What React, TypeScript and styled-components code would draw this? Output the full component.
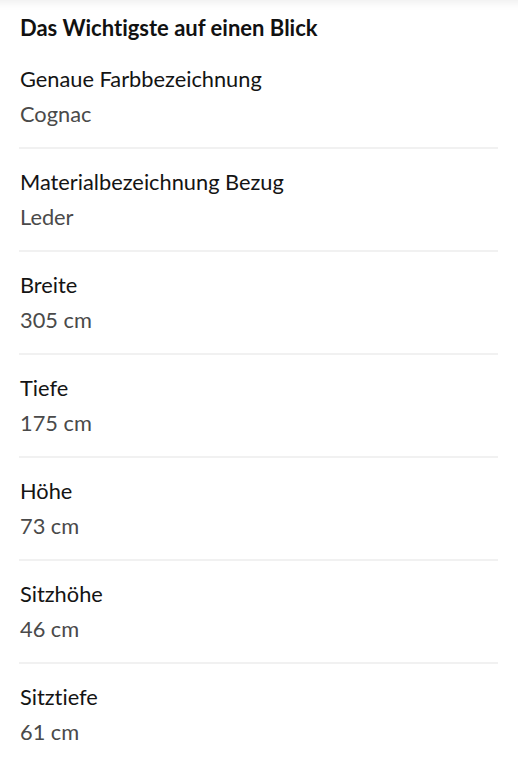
import React from "react";
import styled, { createGlobalStyle } from "styled-components";

const GlobalStyle = createGlobalStyle`
  html, body {
    margin: 0;
    padding: 0;
    background: #fff;
  }
  body {
    font-family: Lato, "Noto Sans", Arial, sans-serif;
    font-variant-ligatures: none;
  }
`;

const Page = styled.section`
  width: 518px;
  min-height: 768px;
  background: #fff;
  box-shadow: inset 0 12px 10px -10px rgba(0, 0, 0, 0.08);
  padding: 14px 20px 0 19px;
  box-sizing: border-box;
`;

const Heading = styled.h2`
  margin: 0 0 4px 1px;
  font-size: 22px;
  line-height: 28px;
  font-weight: 700;
  color: #111;
`;

const List = styled.dl`
  margin: 0;
  padding: 0;
`;

const Row = styled.div<{ $last?: boolean }>`
  display: flex;
  flex-direction: column;
  gap: 11px;
  padding: 21px 0 21px 1px;
  border-bottom: ${(p) => (p.$last ? "none" : "2px solid #f1f1f1")};
`;

const Label = styled.dt`
  margin: 0;
  font-size: 21.8px;
  line-height: 24px;
  color: #141414;
`;

const Value = styled.dd`
  margin: 0;
  font-size: 21.8px;
  line-height: 24px;
  color: #4a4a4a;
`;

const specs = [
  { id: 1, label: "Genaue Farbbezeichnung", value: "Cognac" },
  { id: 2, label: "Materialbezeichnung Bezug", value: "Leder" },
  { id: 3, label: "Breite", value: "305 cm" },
  { id: 4, label: "Tiefe", value: "175 cm" },
  { id: 5, label: "Höhe", value: "73 cm" },
  { id: 6, label: "Sitzhöhe", value: "46 cm" },
  { id: 7, label: "Sitztiefe", value: "61 cm" },
];

function App() {
  return (
    <>
      <GlobalStyle />
      <Page>
        <Heading>Das Wichtigste auf einen Blick</Heading>
        <List>
          {specs.map((item, i) => (
            <Row key={item.id} $last={i === specs.length - 1}>
              <Label>{item.label}</Label>
              <Value>{item.value}</Value>
            </Row>
          ))}
        </List>
      </Page>
    </>
  );
}

export default App;
